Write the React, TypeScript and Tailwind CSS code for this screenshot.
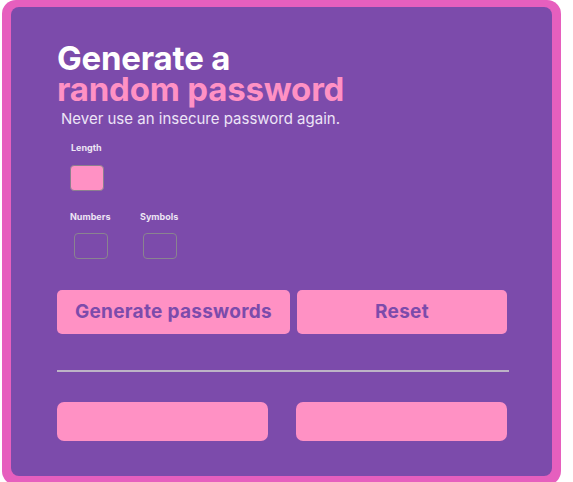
export default function App() {
  return (
    <div className="w-[573px] h-[482px] overflow-hidden bg-white">
      <div className="ml-[2px] w-[559px] rounded-[14px] bg-[#e65fbe] px-[9px] pt-[7px] pb-[9px]">
        <div className="h-[469px] rounded-[8px] bg-[#7c4bab] pl-[46px] pr-[44px] pt-[36px] font-['Inter',sans-serif]">
          <h1 className="text-[33px] font-bold leading-[31px] tracking-[-0.2px] text-white">
            Generate a
            <br />
            <span className="text-[#ff91c4]">random password</span>
          </h1>
          <p className="ml-[4px] mt-[4px] text-[15px] leading-[20px] text-[#ede4f7]">
            Never use an insecure password again.
          </p>

          <div className="ml-[13px] mt-[13px]">
            <label className="ml-[1px] block text-[9px] font-bold leading-[11px] text-[#ece4f4]">Length</label>
            <input
              type="number"
              className="mt-[12px] block h-[26px] w-[34px] rounded-[4px] border border-[#8b7f8f] bg-[#ff91c4]"
            />
          </div>

          <div className="ml-[13px] mt-[20px] flex">
            <div className="flex w-[70px] flex-col">
              <span className="text-[9px] font-bold leading-[11px] text-[#ece4f4]">Numbers</span>
              <div className="ml-[4px] mt-[11px] h-[26px] w-[34px] rounded-[4px] border border-[#8a8390]" />
            </div>
            <div className="flex flex-col">
              <span className="text-[9px] font-bold leading-[11px] text-[#ece4f4]">Symbols</span>
              <div className="ml-[3px] mt-[11px] h-[26px] w-[34px] rounded-[4px] border border-[#8a8390]" />
            </div>
          </div>

          <div className="mt-[31px] flex gap-[7px]">
            <button className="h-[44px] w-[233px] rounded-[5px] bg-[#ff91c4] text-[19px] font-bold tracking-[0.3px] text-[#7c4bab]">
              Generate passwords
            </button>
            <button className="h-[44px] w-[210px] rounded-[5px] bg-[#ff91c4] text-[19px] font-bold tracking-[0.3px] text-[#7c4bab]">
              Reset
            </button>
          </div>

          <hr className="mt-[36px] w-[452px] border-0 border-t-2 border-[#bdb3c6]" />

          <div className="mt-[30px] flex gap-[28px]">
            <div className="h-[39px] w-[211px] rounded-[7px] bg-[#ff91c4]" />
            <div className="h-[39px] w-[211px] rounded-[7px] bg-[#ff91c4]" />
          </div>
        </div>
      </div>
    </div>
  );
}
